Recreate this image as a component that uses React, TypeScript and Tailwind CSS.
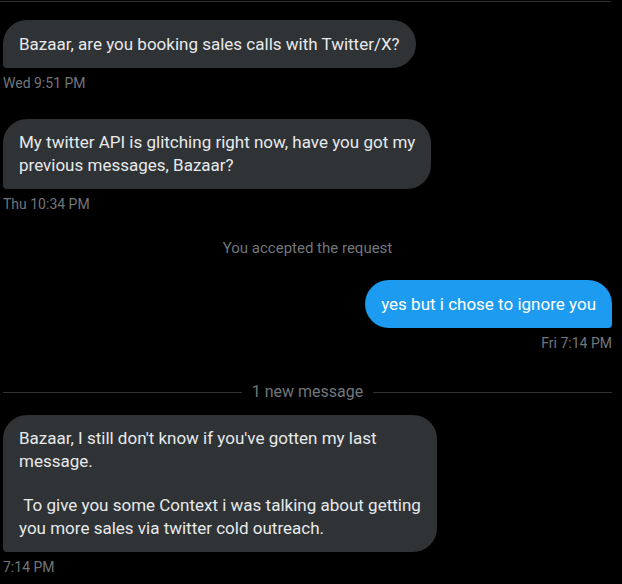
const font = "font-['Roboto','Liberation_Sans',sans-serif]";

const Received = ({ children, tall }: { children: React.ReactNode; tall?: boolean }) => (
  <div
    className={`w-fit rounded-[24px] rounded-bl-[4px] bg-[#2f3336] px-4 py-3 text-[17px] text-[#e7e9ea] whitespace-nowrap ${
      tall ? "leading-6" : "leading-[23px]"
    }`}
  >
    {children}
  </div>
);

const Stamp = ({ text, right }: { text: string; right?: boolean }) => (
  <div className={`mt-[7px] text-[14px] leading-4 text-[#71767b] ${right ? "text-right" : ""}`}>
    {text}
  </div>
);

export default function App() {
  return (
    <main className={`min-h-screen w-[622px] h-[584px] overflow-hidden bg-black ${font}`}>
      <div className="h-[2px] w-[611px] border-b border-[#2f3336]" />

      <div className="flex flex-col pl-[3px] pr-[10px]">
        <div className="mt-[18px]">
          <Received tall>Bazaar, are you booking sales calls with Twitter/X?</Received>
          <Stamp text="Wed 9:51 PM" />
        </div>

        <div className="mt-[28px]">
          <Received>
            My twitter API is glitching right now, have you got my
            <br />
            previous messages, Bazaar?
          </Received>
          <Stamp text="Thu 10:34 PM" />
        </div>

        <div className="mt-[26px] text-center text-[15px] leading-5 text-[#71767b]">
          You accepted the request
        </div>

        <div className="mt-[22px] flex flex-col items-end">
          <div className="w-fit rounded-[24px] rounded-br-[4px] bg-[#1d9bf0] px-4 py-3 text-[17px] leading-6 text-white whitespace-nowrap">
            yes but i chose to ignore you
          </div>
          <Stamp text="Fri 7:14 PM" right />
        </div>

        <div className="mt-[31px] flex items-center gap-2.5">
          <div className="h-px flex-1 bg-[#2f3336]" />
          <span className="text-[16px] leading-5 text-[#71767b]">1 new message</span>
          <div className="h-px flex-1 bg-[#2f3336]" />
        </div>

        <div className="mt-[13px]">
          <Received>
            <div>Bazaar, I still don't know if you've gotten my last</div>
            <div>message.</div>
            <div className="h-[21px]" />
            <div>&nbsp;To give you some Context i was talking about getting</div>
            <div>you more sales via twitter cold outreach.</div>
          </Received>
          <Stamp text="7:14 PM" />
        </div>
      </div>
    </main>
  );
}
